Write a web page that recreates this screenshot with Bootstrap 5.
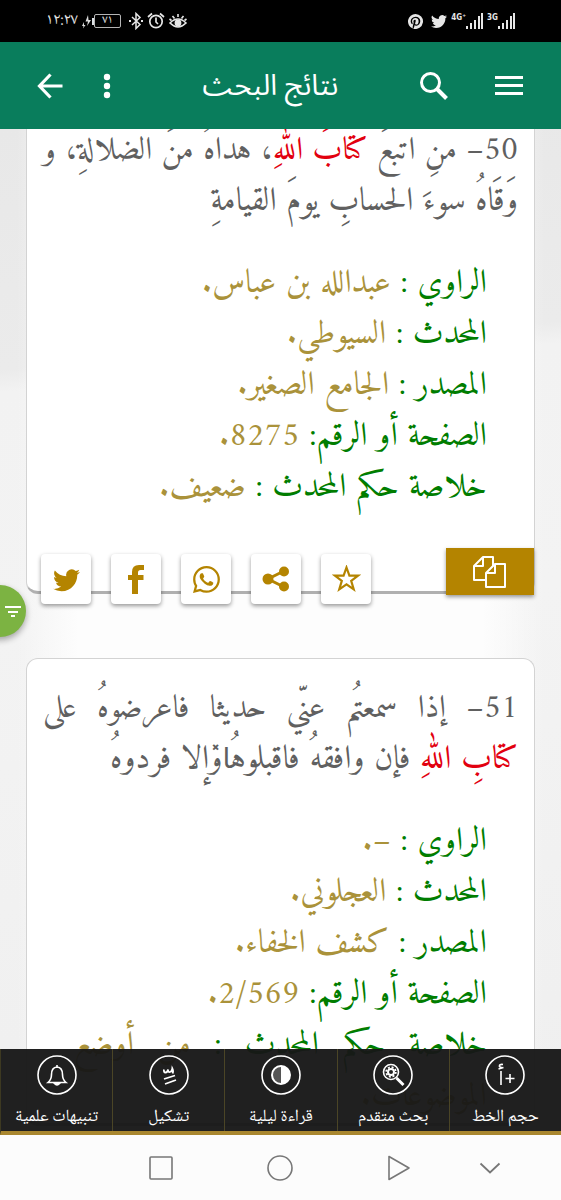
<!DOCTYPE html>
<html lang="ar" dir="rtl">
<head>
<meta charset="utf-8">
<meta name="viewport" content="width=device-width, initial-scale=1">
<title>نتائج البحث</title>
<link href="https://cdn.jsdelivr.net/npm/bootstrap@5.3.0/dist/css/bootstrap.min.css" rel="stylesheet">
<style>
  :root { --brand: #097d5c; --gold: #b48400; --sand: #aa923a; }
  body { font-family: "Noto Naskh Arabic", "DejaVu Sans", sans-serif; background: #fcfcfc; }
  svg { display: block; }

  .phone-status { height: 42px; padding: 0 46px; background: #000; color: #e6e6e6; }
  .clock-text { font: 16px/20px "Noto Naskh Arabic", "DejaVu Sans", sans-serif; }
  .battery { width: 27px; height: 14px; border: 1px solid #b5b5b5; border-radius: 2px; font-size: 12px; line-height: 11px; }
  .signal-label { font: bold 8px/10px "DejaVu Sans Condensed", sans-serif; }

  .app-header { height: 87px; padding: 0 37px; background: var(--brand); }
  .app-header h1 { font: 29px/40px "Noto Sans Arabic", "DejaVu Sans", sans-serif; }
  .header-search { margin-right: 46px; }
  .header-back { margin-right: 30px; }

  .feed { min-height: 0; background: linear-gradient(175deg, #e8e8e8 0, #ebebeb 240px, #f2f2f2 262px, #f3f3f3 500px, #efefef 100%); }
  .results { padding: 0 26px; margin-top: -3px; background: linear-gradient(to right, transparent 3%, #fdfdfd 14%, #fdfdfd 86%, transparent 97%); }
  .hadith { padding-top: 25px; border: 1px solid #d3d3d3; border-bottom: 3px solid #b0b0b0; border-radius: 12px; background: #fff; font-family: Amiri, "Noto Naskh Arabic", "DejaVu Sans", serif; font-size: 33px; line-height: 51px; margin-bottom: 64px; }
  .hadith.is-scrolled { padding-top: 0; border-top: 0; border-top-left-radius: 0; border-top-right-radius: 0; }
  .hadith-text { padding: 0 16px; color: #606060; }
  .line-row { display: block; white-space: nowrap; }
  .hadith-text .is-full { font-size: 32px; }
  .is-full { text-align-last: justify; }
  .hit { color: #e2000f; }
  .pause-sign { font-family: "DejaVu Sans", sans-serif; font-size: 28px; line-height: 1; }
  .meta-list { padding: 0 47px; margin: 31px 0 0; color: var(--sand); white-space: nowrap; }
  .meta-list dt { display: inline; font-weight: 400; color: #007d00; }
  .meta-list dd { display: inline; margin: 0; }

  .card-tools { margin: 34px 0 -13px; }
  .copy-btn { width: 88px; height: 47px; background: var(--gold); box-shadow: 0 2px 4px #0006; }
  .social { margin-top: 6px; padding-left: 14px; gap: 20px; }
  .social .btn { width: 50px; height: 50px; background: #fff; color: var(--gold); border-radius: 4px; box-shadow: 0 2px 4px #0006; }

  .filter-fab { left: -26px; top: 456px; width: 52px; height: 52px; padding-right: 4px; border-radius: 50%; background: #7cb342; box-shadow: 0 3px 6px #0005; }

  .tool-bar { bottom: 0; border-bottom: 4px solid #a9872f; background: #171717f5; border-left: 1px solid #3d3921; }
  .tool-bar .btn { flex: 1 1 0; border: 0 solid #4b4526; border-right-width: 1px; border-radius: 0; padding: 5px 0 0; color: #fff; font-size: 17px; line-height: 26px; white-space: nowrap; }
  .tool-bar .btn:first-child { border-right-width: 0; }
  .ring { width: 42px; height: 42px; margin: 0 auto 9px; }

  .system-nav { height: 65px; display: grid; grid-template-columns: 101fr 119fr 119fr 119fr 63fr 40fr; background: #fcfcfc; }
  .system-nav .btn:first-child { grid-column: 2; }
</style>
</head>
<body>
<div class="d-flex flex-column vh-100 overflow-hidden">

  <div class="phone-status d-flex align-items-center justify-content-between flex-shrink-0" dir="ltr">
    <div class="d-flex align-items-center">
      <span class="clock-text me-1">١٢:٢٧</span>
      <svg width="10" height="16" viewBox="0 0 10 16" fill="#ddd"><path d="M6 2 3.500 8.500H6L5 13l4-6H6.500zM2 9l-2 4h1.500L1 15.500 3.500 12H2z"/></svg>
      <span class="border-start border-2" style="height:7px"></span>
      <span class="battery text-center me-2">٧١</span>
      <svg width="14" height="18" viewBox="0 0 14 18" fill="none" stroke="#e6e6e6" stroke-width="1.500"><path d="M3 5l8 7.500-4 4V1.500l4 4L3 13"/><path d="M0 9h2M12 9h2" stroke-width="2"/></svg>
      <svg class="ms-1" width="18" height="18" viewBox="0 0 18 18" fill="none" stroke="#e6e6e6" stroke-width="1.700"><circle cx="9" cy="9.500" r="6.200"/><path d="M9 5.500V10l2 2M1 5l4-3.500M17 5l-4-3.500"/></svg>
      <svg class="ms-1" width="18" height="18" viewBox="0 0 18 18" fill="none" stroke="#e6e6e6" stroke-width="1.600"><path d="M1 11q8-8 16 0-8 8-16 0zM9 2v3M3.500 4l2 2.500M14.500 4l-2 2.500M.5 7l2 1.500M17.500 7l-2 1.500"/><circle cx="9" cy="11" r="2.600" fill="#e6e6e6"/></svg>
    </div>
    <div class="d-flex align-items-center">
      <svg width="15" height="15" viewBox="0 0 16 16" fill="#e6e6e6"><path d="M8 0a8 8 0 0 0-2.915 15.452c-.07-.633-.134-1.606.027-2.297.146-.625.938-3.977.938-3.977s-.239-.479-.239-1.187c0-1.113.645-1.943 1.448-1.943.682 0 1.012.512 1.012 1.127 0 .686-.437 1.712-.663 2.663-.188.796.4 1.446 1.185 1.446 1.422 0 2.515-1.500 2.515-3.664 0-1.915-1.377-3.254-3.342-3.254-2.276 0-3.612 1.707-3.612 3.471 0 .688.265 1.425.595 1.826a.24.24 0 0 1 .056.230c-.061.252-.196.796-.222.907-.035.146-.116.177-.268.107-1-.465-1.624-1.926-1.624-3.100 0-2.523 1.834-4.840 5.286-4.840 2.775 0 4.932 1.977 4.932 4.620 0 2.757-1.739 4.976-4.151 4.976-.811 0-1.573-.421-1.834-.919l-.498 1.902c-.181.695-.669 1.566-.995 2.097A8 8 0 1 0 8 0z"/></svg>
      <svg class="ms-2 me-1" width="16" height="16" viewBox="0 0 16 16" fill="#e6e6e6"><use href="#bird"/></svg>
      <span class="signal-label align-self-start">4G⁺</span>
      <svg width="17" height="16" viewBox="0 0 17 16" stroke="#e6e6e6" stroke-width="2"><path d="M1 16v-3M5 16v-6M9 16V7M13 16V3M16 16V0"/></svg>
      <span class="signal-label align-self-start ms-1">3G</span>
      <svg width="17" height="16" viewBox="0 0 17 16" stroke="#e6e6e6" stroke-width="2"><path d="M1 16v-3M5 16v-6M9 16V7M13 16V3M16 16V0"/></svg>
    </div>
  </div>

  <header class="app-header d-flex align-items-center flex-shrink-0 text-white">
    <button class="btn p-0 border-0" aria-label="القائمة"><svg width="30" height="20" viewBox="0 0 30 20" fill="#fff"><path d="M1 0h28v3H1zM1 8h28v3H1zM1 16h28v3H1z"/></svg></button>
    <button class="header-search btn p-0 border-0" aria-label="بحث"><svg width="28" height="28" viewBox="0 0 28 28" fill="none" stroke="#fff"><circle cx="10.500" cy="10.500" r="9" stroke-width="3"/><path d="M17 17l9.500 9.500" stroke-width="4"/></svg></button>
    <h1 class="flex-fill text-center m-0">نتائج البحث</h1>
    <button class="btn p-0 border-0" aria-label="المزيد"><svg width="28" height="26" viewBox="0 0 28 26" fill="#fff"><circle cx="14" cy="4" r="3.200"/><circle cx="14" cy="13" r="3.200"/><circle cx="14" cy="22" r="3.200"/></svg></button>
    <button class="header-back btn p-0 border-0" aria-label="رجوع"><svg width="26" height="26" viewBox="0 0 26 26" fill="none" stroke="#fff" stroke-width="3.200"><path d="M25.500 13H3M13.500 1.500L2.500 13l11 11.500"/></svg></button>
  </header>

  <main class="feed flex-fill position-relative overflow-hidden">
    <div class="results">
      <article class="hadith is-scrolled">
        <p class="hadith-text m-0">
          <span class="line-row is-full">50– منِ اتبعَ <span class="hit">كتابَ اللهِ</span>، هداهُ منَ الضلالةِ، و</span>
          <span class="line-row">وَقَاهُ سوءَ الحسابِ يومَ القيامةِ</span>
        </p>
        <dl class="meta-list">
          <div><dt>الراوي :</dt> <dd>عبدالله بن عباس.</dd></div>
          <div><dt>المحدث :</dt> <dd>السيوطي.</dd></div>
          <div><dt>المصدر :</dt> <dd>الجامع الصغير.</dd></div>
          <div><dt>الصفحة أو الرقم:</dt> <dd>8275.</dd></div>
          <div><dt>خلاصة حكم المحدث :</dt> <dd>ضعيف.</dd></div>
        </dl>
        <div class="card-tools d-flex align-items-start justify-content-between">
          <button class="copy-btn btn rounded-0 border-0 p-0 d-flex align-items-center justify-content-center" aria-label="نسخ"><svg width="34" height="32" viewBox="0 0 34 32" fill="#b48400" stroke="#fff" stroke-width="2" stroke-linejoin="round"><path d="M10 1h10v23H1V10z"/><path d="M10 1v9H1" fill="none"/><path d="M22 8h10v23H13V17z"/><path d="M22 8v9h-9" fill="none"/></svg></button>
          <div class="social d-flex">
            <button class="btn border-0 p-0 d-flex align-items-center justify-content-center" aria-label="المفضلة"><svg width="29" height="28" viewBox="0 0 29 28" fill="none" stroke="currentColor" stroke-width="2.200"><path d="M14.500 2.500l2.900 8.200H26l-6.800 5.200 2.500 8.400-7.200-5-7.200 5 2.500-8.400L3 10.700h8.600z"/></svg></button>
            <button class="btn border-0 p-0 d-flex align-items-center justify-content-center" aria-label="مشاركة"><svg width="28" height="28" viewBox="0 0 28 28" fill="currentColor"><path d="M22 6L6 14l16 8" fill="none" stroke="currentColor" stroke-width="3"/><circle cx="22" cy="6.500" r="5"/><circle cx="6" cy="14" r="5.500"/><circle cx="22" cy="21.500" r="5"/></svg></button>
            <button class="btn border-0 p-0 d-flex align-items-center justify-content-center" aria-label="واتساب"><svg width="27" height="27" viewBox="0 0 16 16" fill="currentColor"><path d="M13.601 2.326A7.850 7.850 0 0 0 7.994 0C3.627 0 .068 3.558.064 7.926c0 1.399.366 2.760 1.057 3.965L0 16l4.204-1.102a7.900 7.900 0 0 0 3.790.965h.004c4.368 0 7.926-3.558 7.930-7.930A7.900 7.900 0 0 0 13.600 2.326zM7.994 14.521a6.600 6.600 0 0 1-3.356-.920l-.240-.144-2.494.654.666-2.433-.156-.251a6.560 6.560 0 0 1-1.007-3.505c0-3.626 2.957-6.584 6.591-6.584a6.560 6.560 0 0 1 4.660 1.931 6.560 6.560 0 0 1 1.928 4.660c-.004 3.639-2.961 6.592-6.592 6.592zm3.615-4.934c-.197-.099-1.170-.578-1.353-.646-.182-.065-.315-.099-.445.099-.133.197-.513.646-.627.775-.114.133-.232.148-.430.050-.197-.100-.836-.308-1.592-.985-.590-.525-.985-1.175-1.103-1.372-.114-.198-.011-.304.088-.403.087-.088.197-.232.296-.346.100-.114.133-.198.198-.330.065-.134.034-.248-.015-.347-.050-.099-.445-1.076-.612-1.470-.160-.389-.323-.335-.445-.340-.114-.007-.247-.007-.380-.007a.73.730 0 0 0-.529.247c-.182.198-.691.677-.691 1.654s.710 1.916.810 2.049c.098.133 1.394 2.132 3.383 2.992.470.205.840.326 1.129.418.475.152.904.129 1.246.080.380-.058 1.171-.480 1.338-.943.164-.464.164-.860.114-.943-.049-.084-.182-.133-.380-.232z"/></svg></button>
            <button class="btn border-0 p-0 d-flex align-items-center justify-content-center" aria-label="فيسبوك"><svg width="18" height="30" viewBox="0 0 18 30" fill="currentColor"><path d="M5 30V16H1v-5h4V8Q5 1 12 1h5v5h-3.500Q11 6 11 8.500V11h5.500v5H11v14z"/></svg></button>
            <button class="btn border-0 p-0 d-flex align-items-center justify-content-center" aria-label="تويتر"><svg width="27" height="27" viewBox="0 0 16 16" fill="currentColor"><path id="bird" d="M5.026 15c6.038 0 9.341-5.003 9.341-9.334q.002-.211-.006-.422A6.700 6.700 0 0 0 16 3.542a6.700 6.700 0 0 1-1.889.518 3.300 3.300 0 0 0 1.447-1.817 6.500 6.500 0 0 1-2.087.793A3.286 3.286 0 0 0 7.875 6.030a9.320 9.320 0 0 1-6.767-3.429 3.290 3.290 0 0 0 1.018 4.382A3.300 3.300 0 0 1 .640 6.575v.045a3.290 3.290 0 0 0 2.632 3.218 3.200 3.200 0 0 1-.865.115 3 3 0 0 1-.614-.057 3.280 3.280 0 0 0 3.067 2.277A6.600 6.600 0 0 1 .780 13.580a6 6 0 0 1-.780-.045A9.340 9.340 0 0 0 5.026 15z"/></svg></button>
          </div>
        </div>
      </article>

      <article class="hadith">
        <p class="hadith-text m-0">
          <span class="line-row is-full">51– إذا سمعتُم عنّي حديثا فاعرضوهُ على</span>
          <span class="line-row"><span class="hit">كتابِ اللهِ</span> فإن وافقهُ فاقبلوهُ<span class="pause-sign">ا̽</span>وإلا فردوهُ</span>
        </p>
        <dl class="meta-list">
          <div><dt>الراوي :</dt> <dd>–.</dd></div>
          <div><dt>المحدث :</dt> <dd>العجلوني.</dd></div>
          <div><dt>المصدر :</dt> <dd>كشف الخفاء.</dd></div>
          <div><dt>الصفحة أو الرقم:</dt> <dd>2/569.</dd></div>
          <div class="is-full"><dt>خلاصة حكم المحدث :</dt> <dd>من أوضع</dd></div>
          <div><dd>الموضوعات.</dd></div>
        </dl>
      </article>
    </div>

    <button class="filter-fab btn border-0 position-absolute d-flex align-items-center justify-content-end" dir="ltr" aria-label="تصفية"><svg width="18" height="14" viewBox="0 0 18 14" fill="#fff"><path d="M1 2h16v2H1zM4 7h10v2H4zM7 11h4v2H7z"/></svg></button>

    <nav class="tool-bar position-absolute start-0 end-0 d-flex">
      <button class="btn"><svg class="ring" viewBox="0 0 42 42" fill="none" stroke="#fff" stroke-width="1.600"><circle cx="21" cy="21" r="19"/><path d="M17 17v14M19 10.500q-4-.500-3.500 2 1 1.500 3 1M14.500 15l5-1.500M26 20v9M21.500 24.500h9"/></svg>حجم الخط</button>
      <button class="btn"><svg class="ring" viewBox="0 0 42 42" fill="none" stroke="#fff" stroke-width="1.600"><circle cx="21" cy="21" r="19"/><circle cx="19" cy="18" r="7.500"/><circle cx="19" cy="18" r="3" stroke-width="2"/><circle cx="19" cy="18" r="4.800" stroke-width="1.800" stroke-dasharray="2 1.770"/><path d="M24.500 24l7 7" stroke-width="3"/></svg>بحث متقدم</button>
      <button class="btn"><svg class="ring" viewBox="0 0 42 42" fill="none" stroke="#fff" stroke-width="1.600"><circle cx="21" cy="21" r="19"/><circle cx="21" cy="21" r="9" fill="#555" stroke-width="2"/><path d="M21 12a9 9 0 0 1 0 18z" fill="#fff" stroke="none"/></svg>قراءة ليلية</button>
      <button class="btn"><svg class="ring" viewBox="0 0 42 42" fill="none" stroke="#fff" stroke-width="1.800"><circle cx="21" cy="21" r="19" stroke-width="1.600"/><path d="M16 15.500q-.500 3 1.500 3t2.500-3q0 3 2 2.500t2.300-3.500q1.500 3 .2 5M16 25l11-3.500M17 30l11-4"/></svg>تشكيل</button>
      <button class="btn"><svg class="ring" viewBox="0 0 42 42" fill="none" stroke="#fff" stroke-width="1.600"><circle cx="21" cy="21" r="19"/><path d="M12 28.500q3.500-3 3.500-8 0-7 5.500-7.500 5.500.500 5.500 7.500 0 5 3.500 8zM21 13v-2"/><path d="M18.500 29.500q2.500 3 5 0z" fill="#fff"/></svg>تنبيهات علمية</button>
    </nav>
  </main>

  <nav class="system-nav flex-shrink-0" dir="ltr">
    <button class="btn border-0 p-0" aria-label="التطبيقات"><svg class="mx-auto" width="28" height="28" viewBox="0 0 28 28" fill="none" stroke="#777" stroke-width="1.600"><rect x="3" y="3" width="22" height="22" rx="1"/></svg></button>
    <button class="btn border-0 p-0" aria-label="الرئيسية"><svg class="mx-auto" width="28" height="28" viewBox="0 0 28 28" fill="none" stroke="#777" stroke-width="1.600"><circle cx="14" cy="14" r="12"/></svg></button>
    <button class="btn border-0 p-0" aria-label="السابق"><svg class="mx-auto" width="28" height="28" viewBox="0 0 28 28" fill="none" stroke="#777" stroke-width="1.600" stroke-linejoin="round"><path d="M4 2.500v23L24 14z"/></svg></button>
    <button class="btn border-0 p-0" aria-label="إخفاء"><svg class="mx-auto" width="28" height="28" viewBox="0 0 28 28" fill="none" stroke="#777" stroke-width="1.800"><path d="M4.500 9.500l9.500 9 9.500-9"/></svg></button>
  </nav>
</div>
<script src="https://cdn.jsdelivr.net/npm/bootstrap@5.3.0/dist/js/bootstrap.bundle.min.js"></script>
</body>
</html>
